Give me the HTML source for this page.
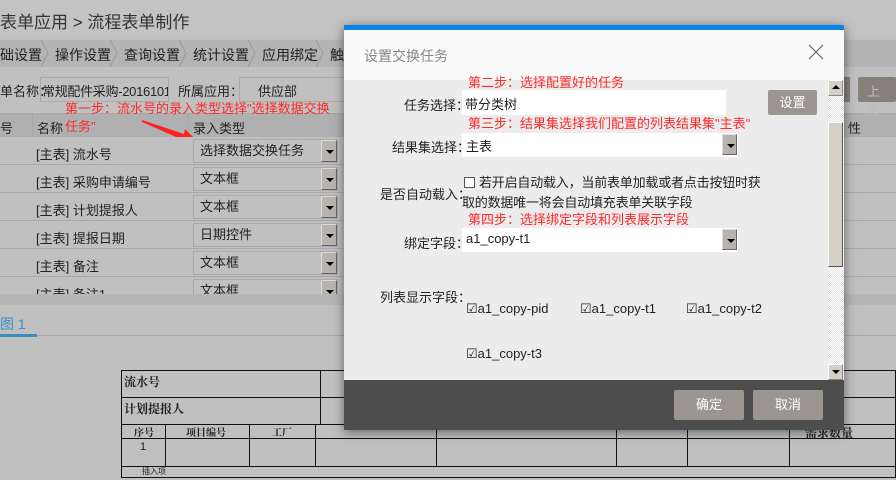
<!DOCTYPE html>
<html><head><meta charset="utf-8"><style>
*{margin:0;padding:0;box-sizing:border-box}
body{width:896px;height:480px;overflow:hidden;background:#c0c0c0;font-family:"Liberation Sans","Noto Sans CJK SC",sans-serif;font-size:13px;color:#222;position:relative}
.a{position:absolute}
.red{color:#ff2a2a;font-size:13px}
.sel{position:absolute;background:#c0c0c0;border:1px solid #aaa;height:24px;font-size:13px;line-height:22px;padding-left:6px}
.dd{position:absolute;right:0;top:0;width:16px;height:22px;background:#b8b4ac;border:1px solid #666;border-top-color:#ddd;border-left-color:#ddd}
.dd:after{content:"";position:absolute;left:4px;top:9px;border:4px solid transparent;border-top:4px solid #000}
.pt{position:absolute;border:1px solid #111}
.b{font-weight:bold;font-family:"Noto Serif CJK SC",serif}
.tab{position:absolute;top:45px;font-size:14px}
</style></head><body>
<div class="a" style="left:0;top:0;width:896px;height:36px;background:#c3c3c3"></div>
<div class="a" style="left:0;top:8px;font-size:17px;color:#333">表单应用 &gt; 流程表单制作</div>
<div class="a" style="left:0;top:40px;width:896px;height:27px;background:#b4b4b4"></div>
<div class="tab" style="left:0">础设置</div>
<div class="tab" style="left:55px">操作设置</div>
<div class="tab" style="left:124px">查询设置</div>
<div class="tab" style="left:193px">统计设置</div>
<div class="tab" style="left:262px">应用绑定</div>
<div class="tab" style="left:330px">触</div>
<svg class="a" style="left:0;top:40px" width="340" height="27"><g stroke="#999" fill="none"><path d="M41 0L48 13L41 27M110 0L117 13L110 27M179 0L186 13L179 27M248 0L255 13L248 27M316 0L323 13L316 27"/></g></svg>
<div class="a" style="left:0;top:81px">单名称：</div>
<div class="a" style="left:40px;top:77px;width:129px;height:25px;border:1px solid #aaa;padding:3px 1px;white-space:nowrap;overflow:hidden;letter-spacing:-0.3px">常规配件采购-2016101</div>
<div class="a" style="left:178px;top:81px">所属应用：</div>
<div class="a" style="left:239px;top:77px;width:110px;height:25px;border:1px solid #aaa;padding:3px 18px">供应部</div>
<div class="a" style="left:0;top:113px;width:896px;height:25px;background:#b0b0b0;border-top:1px solid #a8a8a8"></div>
<div class="a red" style="left:65px;top:98px">第一步：流水号的录入类型选择"选择数据交换</div>
<div class="a red" style="left:65px;top:116px">任务"</div>
<div class="a" style="left:0;top:118px">号</div>
<div class="a" style="left:37px;top:118px">名称</div>
<div class="a" style="left:193px;top:118px">录入类型</div>
<div class="a" style="left:32px;top:113px;width:1px;height:182px;background:#a8a8a8"></div>
<div class="a" style="left:188px;top:113px;width:1px;height:182px;background:#a8a8a8"></div>
<div class="a" style="left:848px;top:118px">性</div>
<svg class="a" style="left:140px;top:118px" width="60" height="30"><polygon points="2,2 44,16 45,11 58,24 40,27 43,22 2,4" fill="#ff2020"/></svg>
<div class="a" style="left:0;top:137px;width:896px;height:158px;background:repeating-linear-gradient(#c0c0c0 0 27px,#aaa 27px 28px)"></div>
<div class="a" style="left:36px;top:144px">[主表] 流水号</div>
<div class="a" style="left:36px;top:172px">[主表] 采购申请编号</div>
<div class="a" style="left:36px;top:200px">[主表] 计划提报人</div>
<div class="a" style="left:36px;top:228px">[主表] 提报日期</div>
<div class="a" style="left:36px;top:256px">[主表] 备注</div>
<div class="a" style="left:36px;top:284px;height:10px;overflow:hidden">[主表] 备注1</div>
<div class="sel" style="left:193px;top:139px;width:145px">选择数据交换任务<span class="dd"></span></div>
<div class="sel" style="left:193px;top:167px;width:145px">文本框<span class="dd"></span></div>
<div class="sel" style="left:193px;top:195px;width:145px">文本框<span class="dd"></span></div>
<div class="sel" style="left:193px;top:223px;width:145px">日期控件<span class="dd"></span></div>
<div class="sel" style="left:193px;top:251px;width:145px">文本框<span class="dd"></span></div>
<div class="a" style="left:193px;top:279px;width:145px;height:15px;overflow:hidden"><div class="sel" style="left:0;top:0;width:145px">文本框<span class="dd"></span></div></div>
<div class="a" style="left:0;top:294px;width:896px;height:11px;background:#b6b6b6"></div>
<div class="a" style="left:0;top:314px;font-size:14px;color:#3a8fbf">图 1</div>
<div class="a" style="left:0;top:335px;width:896px;height:1px;background:#aaa"></div>
<div class="a" style="left:0;top:334px;width:37px;height:3px;background:#3a8fbf"></div>
<div class="a" style="left:858px;top:77px;width:38px;height:25px;background:#858079;border-radius:2px;color:#bbb;padding:4px 9px">上传</div>
<div class="a" style="left:843px;top:77px;width:7px;height:25px;background:#858079"></div>
<!-- print table -->
<div class="pt" style="left:121px;top:370px;width:775px;height:28px"></div>
<div class="pt" style="left:121px;top:397px;width:775px;height:28px"></div>
<div class="a" style="left:320px;top:370px;width:1px;height:55px;background:#111"></div>
<div class="a b" style="left:124px;top:373px;font-size:12px">流水号</div>
<div class="a b" style="left:124px;top:400px;font-size:12px">计划提报人</div>
<div class="pt" style="left:121px;top:424px;width:775px;height:15px"></div>
<div class="pt" style="left:121px;top:438px;width:775px;height:29px"></div>
<div class="pt" style="left:121px;top:466px;width:775px;height:12px"></div>
<div class="a" style="left:121px;top:477px;width:775px;height:3px;border-top:1px solid #111"></div>
<div class="a" style="left:165px;top:424px;width:1px;height:43px;background:#111"></div>
<div class="a" style="left:249px;top:424px;width:1px;height:43px;background:#111"></div>
<div class="a" style="left:315px;top:424px;width:1px;height:43px;background:#111"></div>
<div class="a b" style="left:134px;top:424px;font-size:10px">序号</div>
<div class="a b" style="left:186px;top:424px;font-size:10px">项目编号</div>
<div class="a b" style="left:272px;top:424px;font-size:10px">工厂</div>
<div class="a" style="left:140px;top:441px;font-size:11px">1</div>
<div class="a" style="left:142px;top:466px;font-size:8px">插入项</div>
<div class="a" style="left:436px;top:430px;width:1px;height:37px;background:#111"></div>
<div class="a" style="left:616px;top:430px;width:1px;height:37px;background:#111"></div>
<div class="a" style="left:687px;top:430px;width:1px;height:37px;background:#111"></div>
<div class="a" style="left:789px;top:430px;width:1px;height:37px;background:#111"></div>
<div class="a b" style="left:805px;top:424px;font-size:12px">需求数量</div>
<!-- dialog -->
<div class="a" style="left:344px;top:25px;width:500px;height:405px;box-shadow:0 2px 10px rgba(0,0,0,.5);background:#ececec">
 <div class="a" style="left:0;top:0;width:500px;height:5px;background:#0a84e8"></div>
 <div class="a" style="left:0;top:5px;width:500px;height:50px;background:#fafafa"></div>
 <div class="a" style="left:20px;top:21px;font-size:14px;color:#888">设置交换任务</div>
 <svg class="a" style="left:464px;top:19px" width="16" height="16"><path d="M1 1L15 15M15 1L1 15" stroke="#666" stroke-width="1.2"/></svg>
 <div class="a red" style="left:124px;top:47px">第二步：选择配置好的任务</div>
 <div class="a" style="left:60px;top:70px">任务选择：</div>
 <div class="a" style="left:118px;top:65px;width:264px;height:25px;background:#fff;padding:4px 3px">带分类树</div>
 <div class="a" style="left:424px;top:65px;width:49px;height:25px;background:#9b968f;border-radius:2px;color:#fff;text-align:center;line-height:25px">设置</div>
 <div class="a red" style="left:124px;top:88px">第三步：结果集选择我们配置的列表结果集"主表"</div>
 <div class="a" style="left:48px;top:112px">结果集选择：</div>
 <div class="a" style="left:118px;top:108px;width:276px;height:24px;background:#fff;padding:3px 4px">主表<span class="dd" style="top:1px;right:1px;height:21px;width:15px"></span></div>
 <div class="a" style="left:36px;top:159px">是否自动载入：</div>
 <div class="a" style="left:120px;top:152px;width:11px;height:11px;border:1px solid #555;background:#fff"></div>
 <div class="a" style="left:118px;top:148px;width:300px;line-height:20px;text-indent:17px;letter-spacing:-0.2px">若开启自动载入，当前表单加载或者点击按钮时获<br>取的数据唯一将会自动填充表单关联字段</div>
 <div class="a red" style="left:124px;top:184px">第四步：选择绑定字段和列表展示字段</div>
 <div class="a" style="left:60px;top:208px">绑定字段：</div>
 <div class="a" style="left:118px;top:203px;width:276px;height:24px;background:#fff;padding:3px 4px">a1_copy-t1<span class="dd" style="top:1px;right:1px;height:21px;width:15px"></span></div>
 <div class="a" style="left:36px;top:262px">列表显示字段：</div>
 <div class="a" style="left:122px;top:276px">☑a1_copy-pid</div>
 <div class="a" style="left:236px;top:276px">☑a1_copy-t1</div>
 <div class="a" style="left:342px;top:276px">☑a1_copy-t2</div>
 <div class="a" style="left:122px;top:321px">☑a1_copy-t3</div>
 <div class="a" style="left:484px;top:55px;width:16px;height:300px;background:repeating-conic-gradient(#e4e4e4 0 25%,#fff 0 50%) 0 0/2px 2px"></div>
 <div class="a" style="left:484px;top:55px;width:15px;height:16px;background:#d4d0c8;border:1px solid #888;border-top-color:#fff;border-left-color:#fff"></div>
 <div class="a" style="left:488px;top:60px;border:4px solid transparent;border-bottom:4px solid #000;border-top:0"></div>
 <div class="a" style="left:484px;top:97px;width:15px;height:145px;background:#d4d0c8;border:1px solid #555;border-top-color:#fff;border-left-color:#fff"></div>
 <div class="a" style="left:484px;top:339px;width:15px;height:16px;background:#d4d0c8;border:1px solid #888;border-top-color:#fff;border-left-color:#fff"></div>
 <div class="a" style="left:488px;top:345px;border:4px solid transparent;border-top:4px solid #000;border-bottom:0"></div>
 <div class="a" style="left:0;top:355px;width:500px;height:50px;background:#4d4d4d"></div>
 <div class="a" style="left:330px;top:365px;width:70px;height:30px;background:#9b968f;border-radius:2px;color:#fff;text-align:center;line-height:30px">确定</div>
 <div class="a" style="left:409px;top:365px;width:70px;height:30px;background:#9b968f;border-radius:2px;color:#fff;text-align:center;line-height:30px">取消</div>
</div>
</body></html>
